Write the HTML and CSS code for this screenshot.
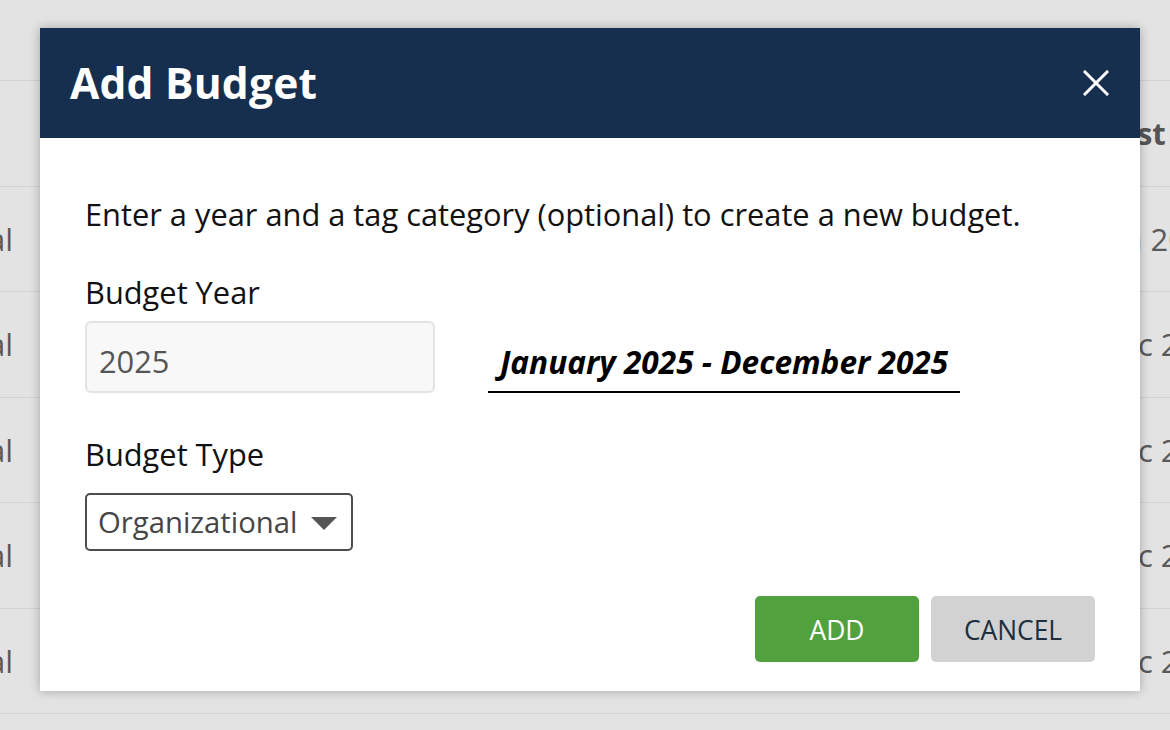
FILE: index.html
```html
<!DOCTYPE html>
<html lang="en">
<head>
<meta charset="utf-8">
<title>Add Budget</title>
<link rel="stylesheet" href="styles.css">
</head>
<body>
<div class="page">
  <div class="toolbar"></div>
  <div class="table">
    <div class="row head"><div class="cell-left"></div><div class="cell-mid"></div><div class="cell-right">Cost</div></div>
    <div class="row"><div class="cell-left">Organizational</div><div class="cell-mid"></div><div class="cell-right">Jan 2026</div></div>
    <div class="row"><div class="cell-left">Organizational</div><div class="cell-mid"></div><div class="cell-right">Dec 2025</div></div>
    <div class="row"><div class="cell-left">Organizational</div><div class="cell-mid"></div><div class="cell-right">Dec 2025</div></div>
    <div class="row"><div class="cell-left">Organizational</div><div class="cell-mid"></div><div class="cell-right">Dec 2025</div></div>
    <div class="row"><div class="cell-left">Organizational</div><div class="cell-mid"></div><div class="cell-right">Dec 2025</div></div>
    <div class="row last"></div>
  </div>
</div>

<div class="modal" role="dialog" aria-labelledby="modal-title">
  <div class="modal-header">
    <h1 id="modal-title" class="modal-title">Add Budget</h1>
    <button class="close-btn" aria-label="Close">
      <svg width="26" height="26" viewBox="0 0 26 26"><path d="M2 2 L24 24 M24 2 L2 24" stroke="#ffffff" stroke-width="3" stroke-linecap="square" fill="none"/></svg>
    </button>
  </div>
  <div class="modal-body">
    <p class="intro">Enter a year and a tag category (optional) to create a new budget.</p>
    <label class="field-label">Budget Year</label>
    <div class="year-row">
      <div class="year-input">2025</div>
      <div class="date-range"><span>January 2025 - December 2025</span></div>
    </div>
    <label class="field-label type-label">Budget Type</label>
    <div class="select">
      <span>Organizational</span>
      <svg class="caret" width="26" height="13" viewBox="0 0 26 13"><path d="M0 0 H26 L13 13 Z" fill="#555555"/></svg>
    </div>
    <div class="actions">
      <button class="btn btn-add">ADD</button>
      <button class="btn btn-cancel">CANCEL</button>
    </div>
  </div>
</div>
</body>
</html>
```

FILE: styles.css
```css
* { box-sizing: border-box; }

html, body {
  margin: 0;
  padding: 0;
  width: 1170px;
  height: 730px;
  overflow: hidden;
  background: #e3e3e3;
  font-family: "Open Sans", "Noto Sans", sans-serif;
}

.page {
  position: relative;
  height: 730px;
  overflow: hidden;
}

.toolbar {
  height: 80px;
}

.table {
  margin-left: -288px;
  width: 1600px;
}

.row {
  display: grid;
  grid-template-columns: 301px 1085px 214px;
  height: 105.5px;
  border-top: 1px solid #d3d3d3;
  align-items: center;
  font-size: 31px;
  color: #5a5a5a;
}

.row.head {
  font-weight: 700;
  color: #555;
}

.cell-left {
  text-align: right;
  white-space: nowrap;
  overflow: hidden;
}

.cell-right {
  white-space: nowrap;
}

/* Modal overlay */
.modal {
  position: absolute;
  top: 28px;
  left: 40px;
  width: 1100px;
  height: 663px;
  background: #ffffff;
  box-shadow: 0 0 10px rgba(0, 0, 0, 0.28);
  display: flex;
  flex-direction: column;
}

.modal-header {
  height: 110px;
  background: #172f4f;
  display: flex;
  align-items: center;
  justify-content: space-between;
  padding: 0 31px 0 30px;
}

.modal-title {
  margin: 0;
  color: #ffffff;
  font-size: 42.5px;
  font-weight: 700;
  letter-spacing: 0.2px;
  line-height: 54px;
}

.close-btn {
  background: none;
  border: none;
  padding: 0;
  width: 26px;
  height: 26px;
  display: flex;
  cursor: pointer;
}

.modal-body {
  flex: 1;
  padding: 55px 45px 29px 45px;
  display: flex;
  flex-direction: column;
}

.intro {
  margin: 0;
  font-size: 30.8px;
  line-height: 42px;
  color: #111;
  white-space: nowrap;
}

.field-label {
  display: block;
  margin-top: 36px;
  font-size: 30.8px;
  line-height: 42px;
  color: #111;
}

.type-label {
  margin-top: 40px;
}

.year-row {
  display: flex;
  align-items: stretch;
  gap: 53px;
  margin-top: 8px;
}

.year-input {
  width: 350px;
  height: 72px;
  background: #f8f8f8;
  border: 2px solid #e3e3e3;
  border-radius: 6px;
  padding: 0 12px;
  display: flex;
  align-items: center;
  font-size: 30.8px;
  color: #555;
  padding-top: 7px;
}

.date-range {
  width: 472px;
  border-bottom: 2px solid #000;
  display: flex;
  align-items: center;
  justify-content: center;
  padding-top: 10px;
  font-size: 31.6px;
  font-weight: 700;
  font-style: italic;
  color: #000;
  white-space: nowrap;
}

.select {
  margin-top: 18px;
  width: 268px;
  height: 58px;
  border: 2px solid #4d4d4d;
  border-radius: 5px;
  display: flex;
  align-items: center;
  justify-content: space-between;
  padding: 0 14px 0 11px;
  font-size: 29.3px;
  color: #454545;
  white-space: nowrap;
}

.select .caret {
  margin-top: 2px;
  flex-shrink: 0;
}

.actions {
  margin-top: auto;
  display: flex;
  justify-content: flex-end;
  gap: 12px;
}

.btn {
  width: 164px;
  height: 66px;
  border: none;
  border-radius: 5px;
  font-family: "Open Sans", "Noto Sans", sans-serif;
  font-size: 26.4px;
  cursor: pointer;
  padding-top: 2px;
}

.btn-add {
  background: #52a13f;
  color: #ffffff;
}

.btn-cancel {
  background: #d2d2d2;
  color: #1e3040;
}
```
